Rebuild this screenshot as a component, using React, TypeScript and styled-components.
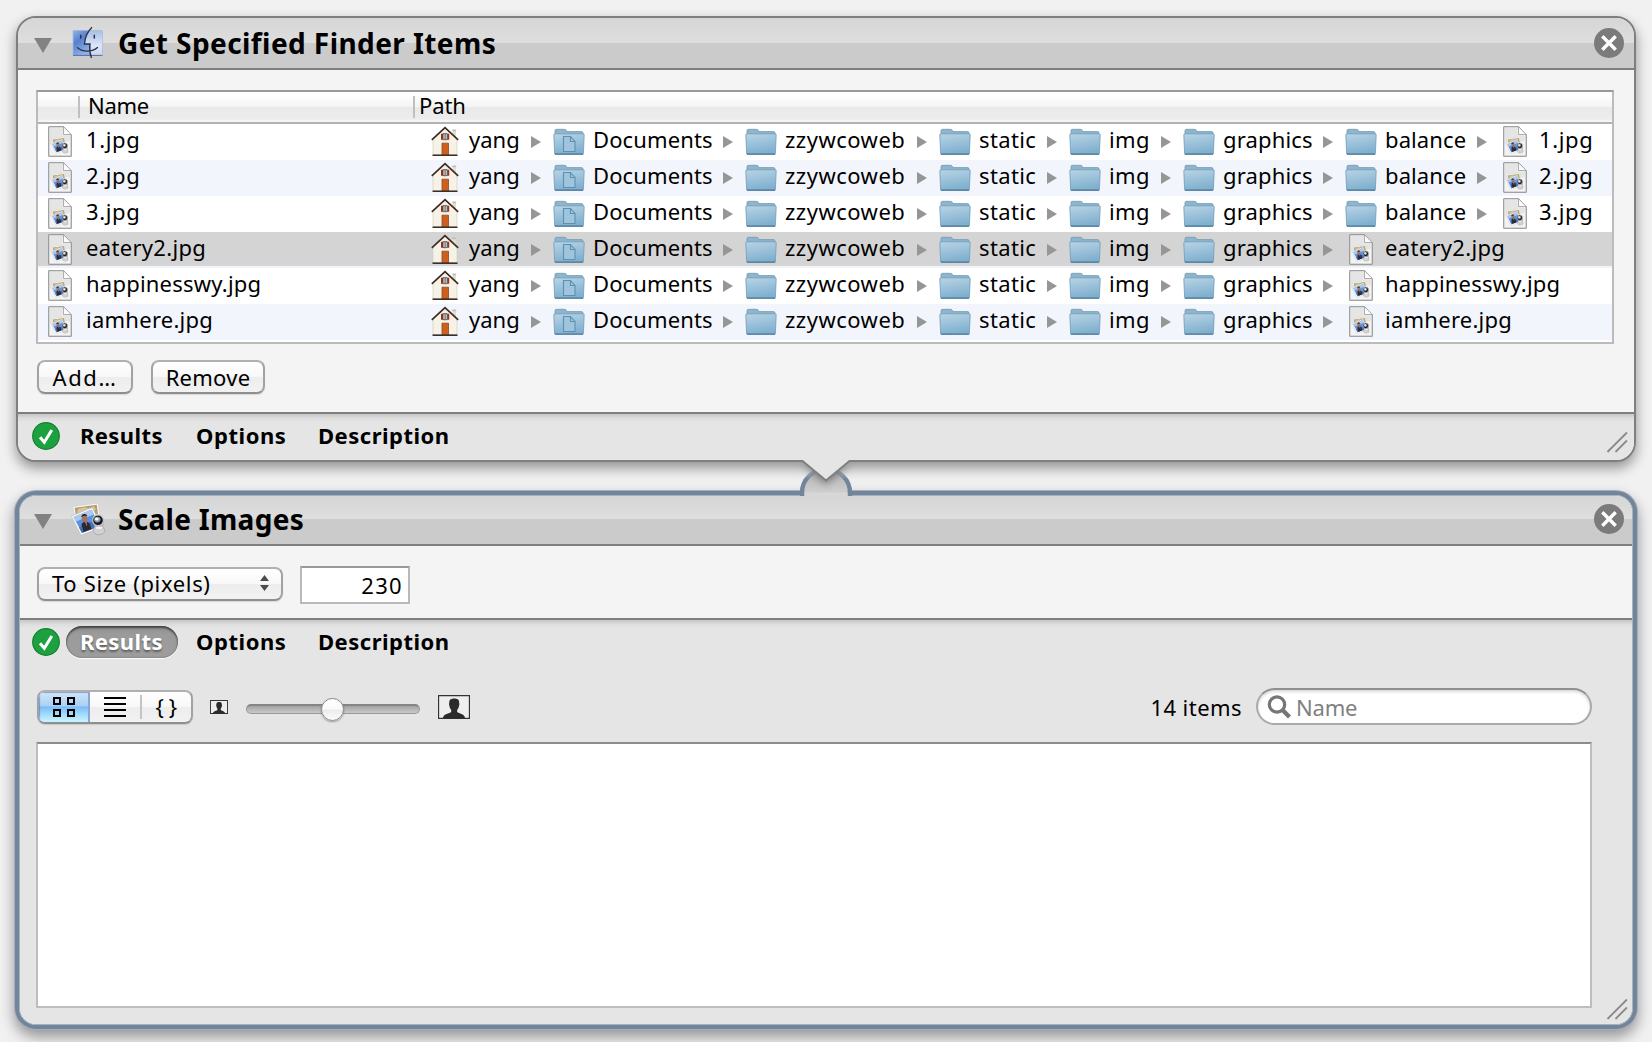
import React from "react";
import styled, { createGlobalStyle, css } from "styled-components";

const GlobalStyle = createGlobalStyle`
  * { box-sizing: border-box; }
  body {
    margin: 0;
    background: #f1f1f1;
    color: #000;
    font: 22px/30px "Noto Sans", "Open Sans", sans-serif;
  }
  svg { display: block; flex: none; }
`;

const Workflow = styled.main`
  position: relative;
  display: flex;
  flex-direction: column;
  height: 1042px;
  padding: 16px 15px 0;
  overflow: hidden;
`;

/* ---------- cards ---------- */

const Card = styled.section`
  display: flex;
  flex-direction: column;
  height: 446px;
  margin: 0 1px;
  border: 2px solid #7f7f7f;
  border-radius: 20px;
  background: #f4f4f4;
  overflow: hidden;
  box-shadow: 0 6px 13px rgba(0, 0, 0, 0.4);
`;

const SelectedCard = styled.section`
  height: 538px;
  margin-top: 29px;
  border: 4px solid #73859b;
  border-radius: 21px;
  background: #a6b1be;
  box-shadow: 0 0 0 1px #a3afbd, 0 7px 14px 1px rgba(0, 0, 0, 0.38);
`;

const SelectedInner = styled.div`
  display: flex;
  flex-direction: column;
  height: 100%;
  border: 1px solid #a6b1be;
  border-radius: 17px;
  background: #f4f4f4;
  overflow: hidden;
`;

const CardHeader = styled.header<{ $compact?: boolean }>`
  display: flex;
  align-items: center;
  flex: none;
  height: ${(p) => (p.$compact ? 50 : 52)}px;
  padding: ${(p) => (p.$compact ? "0 8px 2px 14px" : "0 10px 0 16px")};
  border-bottom: 2px solid #7f7f7f;
  background: ${(p) =>
    p.$compact
      ? "linear-gradient(#d6d6d6, #dedede 23px, #cbcbcb 23px, #cbcbcb)"
      : "linear-gradient(#d6d6d6, #dedede 25px, #cbcbcb 25px, #cbcbcb)"};
`;

const CardTitle = styled.h1<{ $spacing: number }>`
  flex: 1;
  margin: 0;
  font-size: 28px;
  line-height: 40px;
  font-weight: 700;
  letter-spacing: ${(p) => p.$spacing}px;
  white-space: nowrap;
`;

const Disclosure = styled.span`
  width: 0;
  height: 0;
  margin-top: 5px;
  border: 9px solid transparent;
  border-top: 15px solid #828282;
  border-bottom: 0;
`;

const IconSlot = styled.span<{ $left: number; $width: number }>`
  display: flex;
  width: ${(p) => p.$width}px;
  margin-left: ${(p) => p.$left}px;
`;

const CloseButton = styled.button`
  display: flex;
  padding: 0;
  border: 0;
  background: none;
`;

/* ---------- file table ---------- */

const FinderBody = styled.div`
  flex: none;
  height: 342px;
  padding: 20px 20px 0 18px;
`;

const Table = styled.div`
  display: flex;
  flex-direction: column;
  height: 254px;
  border: 2px solid #bbb;
  border-top-color: #999;
  background: #fff;
`;

const TableHead = styled.div`
  display: flex;
  align-items: center;
  flex: none;
  height: 32px;
  border-bottom: 2px solid #b2b2b2;
  background: linear-gradient(#fff, #fdfdfd 5px, #f3f3f3 15px, #e9e9e9 15px, #ececec 27px, #f7f7f7 29px, #f7f7f7);
`;

const HeadCell = styled.span<{ $width?: number; $pad: number; $spacing?: number }>`
  ${(p) => (p.$width ? css`width: ${p.$width}px;` : css`flex: 1;`)}
  height: 22px;
  padding-left: ${(p) => p.$pad}px;
  border-left: 2px solid #c0c0c0;
  line-height: 19px;
  letter-spacing: ${(p) => p.$spacing ?? 0}px;
`;

const HeadSpacer = styled.span`
  width: 40px;
`;

const Row = styled.div<{ $tone: "plain" | "alt" | "selected" }>`
  display: flex;
  flex: none;
  height: 36px;
  background: ${(p) =>
    p.$tone === "selected"
      ? "linear-gradient(#d4d4d4 34px, #f1f5fb 34px)"
      : p.$tone === "alt"
      ? "#f2f5fb"
      : "#fff"};
`;

const Label = styled.span<{ $spacing: number }>`
  height: 31px;
  line-height: 31px;
  letter-spacing: ${(p) => p.$spacing}px;
  white-space: nowrap;
`;

const NameCell = styled.div`
  display: flex;
  width: 391px;
  padding-left: 10px;
  gap: 14px;
`;

const Crumb = styled.div<{ $width: number }>`
  display: flex;
  width: ${(p) => p.$width}px;
  padding-right: 12px;
`;

const CrumbIcon = styled.span`
  display: flex;
  justify-content: center;
  flex: none;
  width: 32px;
  margin-right: 8px;
`;

const CrumbArrow = styled.span`
  width: 0;
  height: 0;
  margin: 12px 0 0 auto;
  border: 6px solid transparent;
  border-left: 10px solid #969696;
  border-right: 0;
`;

/* ---------- buttons and fields ---------- */

const ButtonRow = styled.div`
  display: flex;
  gap: 18px;
  padding: 16px 0 0 1px;
`;

const aquaSurface = css`
  border: 2px solid #a2a2a2;
  border-top-color: #b0b0b0;
  border-bottom-color: #8f8f8f;
  border-radius: 8px;
  background: linear-gradient(#fff, #f8f8f8 48%, #ededed 52%, #f2f2f2);
  box-shadow: 0 1px 1px rgba(0, 0, 0, 0.12);
  color: #000;
  font: inherit;
`;

const PushButton = styled.button<{ $width: number; $spacing: number }>`
  ${aquaSurface}
  width: ${(p) => p.$width}px;
  height: 34px;
  padding: 0;
  line-height: 30px;
  letter-spacing: ${(p) => p.$spacing}px;
`;

const ScaleBody = styled.div`
  display: flex;
  flex: none;
  height: 72px;
  padding: 20px 0 0 17px;
`;

const PopUp = styled.button`
  ${aquaSurface}
  display: flex;
  justify-content: space-between;
  align-items: center;
  width: 246px;
  height: 34px;
  margin-top: 1px;
  padding: 0 12px 2px 13px;
  letter-spacing: 0.65px;
  line-height: 28px;
`;

const NumberField = styled.input`
  width: 110px;
  height: 38px;
  margin-left: 17px;
  padding: 0 5px 0 0;
  border: 2px solid #b9b9b9;
  border-top-color: #989898;
  background: #fff;
  color: #000;
  font: inherit;
  letter-spacing: 1.3px;
  text-align: right;
`;

/* ---------- tabs ---------- */

const Footer = styled.footer`
  display: flex;
  flex-direction: column;
  flex: 1;
  min-height: 0;
  border-top: 2px solid #7f7f7f;
  background: linear-gradient(#c6c6c6, #dcdcdc 4px, #e5e5e5 8px);
`;

const TabBar = styled.nav<{ $left: number }>`
  display: flex;
  align-items: center;
  flex: none;
  height: 44px;
  padding-left: ${(p) => p.$left}px;
`;

const Tab = styled.button<{ $active?: boolean; $width: number; $spacing: number }>`
  width: ${(p) => p.$width}px;
  height: 32px;
  margin-left: 4px;
  padding: 0 0 2px 14px;
  border: 0;
  border-radius: 16px;
  background: none;
  color: #000;
  font: inherit;
  font-weight: 700;
  line-height: 30px;
  letter-spacing: ${(p) => p.$spacing}px;
  text-align: left;
  &:first-of-type { margin-left: 6px; }
  ${(p) =>
    p.$active &&
    css`
      background: linear-gradient(#8d8d8d, #9b9b9b 8px, #9d9d9d);
      color: #fff;
      text-shadow: 0 2px 2px rgba(0, 0, 0, 0.4);
      box-shadow: inset 0 2px 2px rgba(0, 0, 0, 0.5), inset 0 0 2px rgba(0, 0, 0, 0.35),
        0 1px 1px rgba(255, 255, 255, 0.9);
    `}
`;

const GripCorner = styled.span<{ $right: number; $bottom: number }>`
  display: flex;
  align-self: flex-end;
  margin: 0 ${(p) => p.$right}px ${(p) => p.$bottom}px auto;
`;

const FooterRow = styled.div`
  display: flex;
  flex: 1;
`;

/* ---------- results ---------- */

const Toolbar = styled.div`
  display: flex;
  align-items: center;
  flex: none;
  height: 38px;
  margin-top: 24px;
  padding: 0 40px 0 17px;
`;

const Segmented = styled.div`
  ${aquaSurface}
  display: flex;
  width: 156px;
  height: 34px;
  overflow: hidden;
`;

const Segment = styled.button<{ $active?: boolean; $divided?: boolean }>`
  display: flex;
  align-items: center;
  justify-content: center;
  flex: 1;
  position: relative;
  padding: 0;
  border: 0;
  background: ${(p) =>
    p.$active
      ? "linear-gradient(#d3e5f8, #a9d1f6 46%, #7cbcf5 50%, #a3dcfd 75%, #c9f5ff)"
      : "none"};
  ${(p) => p.$active && css`
    padding-right: 2px;
    box-shadow: inset -2px 0 #8aa6d6, inset 1px 1px 1px rgba(70, 100, 170, 0.5);
  `}
  ${(p) =>
    p.$divided &&
    css`
      padding-left: 2px;
      &::before {
        content: "";
        position: absolute;
        left: 0;
        top: 3px;
        bottom: 3px;
        width: 2px;
        background: #c4c4c4;
      }
    `}
`;

const Braces = styled.span`
  font: 22px/26px "Noto Sans", sans-serif;
  letter-spacing: 5px;
  margin: -3px -5px 0 0;
`;

const Slider = styled.div`
  display: flex;
  align-items: center;
  width: 174px;
  height: 10px;
  margin: 0 18px;
  padding-left: 74px;
  border: 1px solid #999;
  border-top: 2px solid #858585;
  border-radius: 5px;
  background: linear-gradient(#a3a3a3, #c9c9c9);
`;

const Knob = styled.span`
  flex: none;
  width: 23px;
  height: 23px;
  margin-top: -1px;
  border: 1.5px solid #8c8c8c;
  border-radius: 50%;
  background: linear-gradient(#fff, #fafafa 45%, #ececec 55%, #fbfbfb);
  box-shadow: 0 1px 2px rgba(0, 0, 0, 0.3);
`;

const SliderWrap = styled.div`
  padding-top: 4px;
`;

const ItemCount = styled.span`
  margin: 0 14px 0 auto;
  letter-spacing: 0.45px;
`;

const SearchField = styled.label`
  display: flex;
  align-items: center;
  gap: 4px;
  width: 336px;
  height: 37px;
  margin-top: -1px;
  padding-left: 9px;
  border: 2px solid #aaa;
  border-top-color: #8f8f8f;
  border-radius: 19px;
  background: #fff;
  box-shadow: inset 0 2px 3px rgba(0, 0, 0, 0.15);
`;

const SearchInput = styled.input`
  width: 280px;
  padding: 0 0 0 1px;
  border: 0;
  outline: 0;
  background: none;
  font: inherit;
  letter-spacing: -0.2px;
  &::placeholder { color: #808080; opacity: 1; }
`;

const ResultsArea = styled.div`
  display: flex;
  flex: 1;
  padding-left: 16px;
  margin-top: 16px;
`;

const ResultsPane = styled.div`
  width: 1556px;
  height: 266px;
  border: 2px solid #bdbdbd;
  border-top-color: #8c8c8c;
  background: #fff;
`;

/* The arrow lies over the gap between the two cards. */
const Connector = styled.svg`
  position: absolute;
  left: 786px;
  top: 454px;
`;

/* ---------- drawings ---------- */

const FinderIcon = () => (
  <svg width="32" height="34" viewBox="0 0 32 34">
    <defs>
      <linearGradient id="fl" x1="0" y1="0" x2=".5" y2="1">
        <stop offset="0" stopColor="#8fafe6" />
        <stop offset=".45" stopColor="#5680cd" />
        <stop offset="1" stopColor="#8fb2ea" />
      </linearGradient>
      <linearGradient id="fr" x1="0" y1="0" x2="0" y2="1">
        <stop offset="0" stopColor="#a9bde6" />
        <stop offset=".6" stopColor="#dce6f7" />
        <stop offset="1" stopColor="#c7d7f3" />
      </linearGradient>
    </defs>
    <rect x="1" y="4.500" width="29.500" height="25" rx="1" fill="url(#fr)" stroke="#a3b4d6" strokeWidth=".6" />
    <path d="M1.300 4.800H17C14 9 12.500 14 12.500 18H18C17.500 22 17.500 25 18.300 29.300H1.300Z" fill="url(#fl)" />
    <path d="M1 29.400H30.500" stroke="#5c6f99" strokeWidth="1" />
    <path d="M20 1.200C15.500 5.500 13 12 12.400 18H18C17.200 23 17.800 27.500 19.500 32" fill="none" stroke="#2a3140" strokeWidth="1.300" />
    <path d="M8.700 9.200V12M22.300 9.200V12" stroke="#2a3140" strokeWidth="1.500" strokeLinecap="round" />
    <path d="M5.500 21.700C11 26.300 20 26.300 25.500 21.500" fill="none" stroke="#2a3140" strokeWidth="1.300" strokeLinecap="round" />
  </svg>
);

const PreviewShapes = () => (
  <g>
    <path d="M1.800 4.500L27.300 1L30 24L6 27Z" fill="#fbfbfb" stroke="#c9c9c9" strokeWidth=".6" />
    <path d="M3.600 5.800L25.800 2.800L27 12L5 14Z" fill="#b59d70" />
    <path d="M7 7L13 5.300L19 6.500L23 4L25 8L6 11Z" fill="#d6c59c" />
    <path d="M.4 14.200L21.200 5.400L31 25L10 33.200Z" fill="#fff" stroke="#bdbdbd" strokeWidth=".7" />
    <path d="M2.500 15L20.500 7.500L28.600 24.200L10.900 31Z" fill="#5d93dc" />
    <path d="M2.500 15L20.500 7.500L23 12.500L5 19.500Z" fill="#a9c9f0" />
    <path d="M8 25.500L15 20.500L26.500 19.500L28.600 24.200L10.900 31Z" fill="#3f73bc" />
    <ellipse cx="13.500" cy="16" rx="2.800" ry="3.600" fill="#a5745c" />
    <path d="M10.300 15C10.500 11.500 15 10.800 16.500 14C14.500 13.400 12.500 13.400 10.300 15Z" fill="#2a1d18" />
    <path d="M10.500 22.500C11 19.500 16 18.500 18.500 21.500L20.500 27L12.500 30Z" fill="#2e2832" />
    <path d="M13.500 19.700L15.700 19.300L16.200 24.500Z" fill="#c96a5a" />
    <ellipse cx="28" cy="28.500" rx="5.800" ry="4.200" fill="#d2d2d2" stroke="#999" strokeWidth=".6" />
    <path d="M23.500 21V26.500C25 29 31.500 29 33 26V20Z" fill="#bcbcbc" />
    <ellipse cx="28" cy="26" rx="3.500" ry="1.500" fill="#f1f1f1" />
    <circle cx="27" cy="18.300" r="5.400" fill="#17191d" stroke="#c4c4c4" strokeWidth="1.200" />
    <ellipse cx="26.300" cy="17.600" rx="3.200" ry="2.800" fill="#8f9bb0" />
    <ellipse cx="25.800" cy="17" rx="1.900" ry="1.600" fill="#f2f5fa" />
  </g>
);

const PreviewIcon = () => (
  <svg width="36" height="34" viewBox="0 0 36 34">
    <PreviewShapes />
  </svg>
);

const JpegIcon = () => (
  <svg width="24" height="33" viewBox="0 0 24 33">
    <path d="M.7 2.700H15.500L23.300 11V32.300H.7Z" fill="#e9e9e9" stroke="#8e8e8e" strokeWidth="1" />
    <path d="M2 4H14.500V12H22V31H2Z" fill="#f3f3f3" />
    <path d="M2 4H14.500V12H22V17L2 20Z" fill="#dedede" opacity=".7" />
    <g transform="translate(3 12.500) scale(.51)">
      <PreviewShapes />
    </g>
    <path d="M15.500 2.700V10.500H23.300Z" fill="#fdfdfd" stroke="#9b9b9b" strokeWidth=".8" />
  </svg>
);

const HomeIcon = () => (
  <svg width="28" height="33" viewBox="0 0 28 33">
    <path d="M21.500 6.500H25V14H21.500Z" fill="#e6dfd1" />
    <path d="M21.300 5.500H25.200V7.300H21.300Z" fill="#c9bfa9" />
    <path d="M2 15L14 4.500L26 15V30.500H2Z" fill="#f6f2e6" stroke="#d6cfbd" strokeWidth=".7" />
    <path d="M.8 15.800L14 3.600L27.200 15.800" fill="none" stroke="#3b2d27" strokeWidth="1.700" />
    <path d="M10 9.700H12V15.700H10ZM16.200 9.700H18.200V15.700H16.200Z" fill="#a32c1d" />
    <path d="M12 9.700H16.200V15.700H12Z" fill="#dfe4e2" stroke="#4a4540" strokeWidth=".8" />
    <path d="M14.100 9.700V15.700" stroke="#4a4540" strokeWidth=".9" />
    <path d="M11 19.200H17.500V31H11Z" fill="#cf5f1f" stroke="#8a4a24" strokeWidth=".8" />
    <path d="M1.500 31.200H26.500" stroke="#3a2f2a" strokeWidth="1.600" />
  </svg>
);

const FolderIcon = ({ documents }: { documents?: boolean }) => (
  <svg width="32" height="33" viewBox="0 0 32 33">
    <defs>
      <linearGradient id="fold" x1="0" y1="0" x2=".25" y2="1">
        <stop offset="0" stopColor="#b9d4e5" />
        <stop offset="1" stopColor="#80b0cf" />
      </linearGradient>
    </defs>
    <path d="M2 13V6.500Q2 5.300 3.500 5.300H11.500Q13 5.300 13.500 6.600L14 7.600H28.500Q30 7.600 30 9V13Z" fill="#8fb5cc" stroke="#7099b3" strokeWidth=".8" />
    <path d="M.8 10.800Q.8 9.800 2 9.800H30Q31.300 9.800 31.200 10.800L30.400 29.300Q30.300 30.300 29.300 30.300H2.700Q1.700 30.300 1.600 29.300Z" fill="url(#fold)" stroke="#6d9cbb" strokeWidth=".8" />
    <path d="M1.800 30.100H30.200" stroke="#4a7898" strokeWidth="1.200" />
    {documents && (
      <path d="M10.500 12.500H17.500L22 17.500V27.500H10.500ZM17.500 12.500V17.500H22" fill="#9fc4dc" stroke="#5b90b5" strokeWidth="1.100" />
    )}
  </svg>
);

const CheckIcon = () => (
  <svg width="28" height="28" viewBox="0 0 28 28">
    <circle cx="14" cy="14" r="13.300" fill="#1da140" stroke="#128030" strokeWidth="1.200" />
    <path d="M8 15.200L12.300 20.200L19.800 8" fill="none" stroke="#fff" strokeWidth="3" />
  </svg>
);

const CloseIcon = () => (
  <svg width="30" height="30" viewBox="0 0 30 30">
    <circle cx="15" cy="15" r="15" fill="#7b7b7b" />
    <path d="M8.300 8.300L21.700 21.700M21.700 8.300L8.300 21.700" stroke="#fff" strokeWidth="3.400" />
  </svg>
);

const GripIcon = () => (
  <svg width="21" height="21" viewBox="0 0 21 21">
    <path d="M0 19.500L19.500 0M8 19.500L19.500 8" transform="translate(1 1.300)" stroke="#fff" strokeWidth="1" />
    <path d="M.5 20L20 .5M8.500 20L20 8.500" stroke="#8a8a8a" strokeWidth="2" />
  </svg>
);

const UpDownIcon = () => (
  <svg width="9" height="16" viewBox="0 0 9 16">
    <path d="M0 6L4.500 0L9 6ZM0 10L4.500 16L9 10Z" fill="#4b4b4b" />
  </svg>
);

const GridIcon = () => (
  <svg width="22" height="20" viewBox="0 0 22 20">
    <path d="M1 1H7V7H1ZM15 1H21V7H15ZM1 13H7V19H1ZM15 13H21V19H15Z" fill="none" stroke="#000" strokeWidth="2" />
  </svg>
);

const ListIcon = () => (
  <svg width="22" height="20" viewBox="0 0 22 20">
    <path d="M0 1H22M0 7H22M0 13H22M0 19H22" stroke="#000" strokeWidth="2" />
  </svg>
);

const PortraitIcon = ({ width, height }: { width: number; height: number }) => (
  <svg width={width} height={height} viewBox="0 0 32 24" preserveAspectRatio="none">
    <rect
      x=".5"
      y=".5"
      width="31"
      height="23"
      fill="#eee"
      stroke="#333"
      strokeWidth="1.300"
      vectorEffect="non-scaling-stroke"
    />
    <path
      d="M5 23.500C5 20 8 19.300 12 17.800C13.500 17.200 13.600 16 13 14.500C11.500 13 11.700 11.500 11.200 10C10.700 8.800 11.200 8.500 11.300 7.500C11.200 4.500 13.500 3.600 16.200 3.600C19 3.600 21.200 4.500 21.100 7.500C21.200 8.500 21.700 8.800 21.200 10C20.700 11.500 20.900 13 19.400 14.500C18.800 16 18.900 17.200 20.400 17.800C24 19.300 27 20 27 23.500Z"
      fill="#2b2b2b"
    />
  </svg>
);

const SearchIcon = () => (
  <svg width="24" height="24" viewBox="0 0 24 24">
    <circle cx="10" cy="9.500" r="7.700" fill="none" stroke="#767676" strokeWidth="3.200" />
    <path d="M15 14.500L22.500 22" stroke="#767676" strokeWidth="4.200" />
  </svg>
);

const ConnectorArrow = () => (
  <Connector width="80" height="46" viewBox="0 0 80 46">
    <defs>
      <linearGradient id="bump" x1="0" y1="0" x2="0" y2="1">
        <stop offset="0" stopColor="#b4b4b4" />
        <stop offset="1" stopColor="#cfcfcf" />
      </linearGradient>
      <linearGradient id="rim" gradientUnits="userSpaceOnUse" x1="0" y1="15" x2="0" y2="25">
        <stop offset="0" stopColor="#73859b" stopOpacity=".3" />
        <stop offset="1" stopColor="#73859b" />
      </linearGradient>
      <filter id="drop" x="-30%" y="-30%" width="160%" height="200%">
        <feDropShadow dx="0" dy="4" stdDeviation="3.500" floodOpacity=".3" />
      </filter>
      <clipPath id="below">
        <rect x="0" y="8" width="80" height="40" />
      </clipPath>
    </defs>
    <path d="M18 39A22 22 0 0 1 62 39Z" fill="url(#bump)" />
    <path d="M18 38.500H62V42H18Z" fill="#d7d7d7" />
    <path d="M16 42V39A24 24 0 0 1 64 39V42" fill="none" stroke="url(#rim)" strokeWidth="4.500" />
    <g clipPath="url(#below)">
      <path d="M16 7L40 27L64 7Z" fill="#e5e5e5" filter="url(#drop)" />
    </g>
    <path d="M15.500 5.500H64.500L40 26Z" fill="#e5e5e5" />
    <path d="M14 7H16.500L40 26.500L63.500 7H66" fill="none" stroke="#7f7f7f" strokeWidth="2" />
  </Connector>
);

/* ---------- data ---------- */

type CrumbData = { label: string; kind: "home" | "documents" | "folder"; width: number; spacing: number };

const HOME_PATH: CrumbData[] = [
  { label: "yang", kind: "home", width: 124, spacing: 0 },
  { label: "Documents", kind: "documents", width: 192, spacing: 0.12 },
  { label: "zzywcoweb", kind: "folder", width: 194, spacing: 0.5 },
  { label: "static", kind: "folder", width: 130, spacing: 0.38 },
  { label: "img", kind: "folder", width: 114, spacing: 0.4 },
  { label: "graphics", kind: "folder", width: 162, spacing: 0.15 },
];
const BALANCE: CrumbData = { label: "balance", kind: "folder", width: 154, spacing: 0.1 };

const FILES = [
  { name: "1.jpg", spacing: 0.65, nested: true },
  { name: "2.jpg", spacing: 0.65, nested: true },
  { name: "3.jpg", spacing: 0.65, nested: true },
  { name: "eatery2.jpg", spacing: 0.32, selected: true },
  { name: "happinesswy.jpg", spacing: 0.22 },
  { name: "iamhere.jpg", spacing: 0.26 },
];

const CrumbItem = ({ label, kind, width, spacing }: CrumbData) => (
  <Crumb $width={width}>
    <CrumbIcon>{kind === "home" ? <HomeIcon /> : <FolderIcon documents={kind === "documents"} />}</CrumbIcon>
    <Label $spacing={spacing}>{label}</Label>
    <CrumbArrow />
  </Crumb>
);

const Tabs = ({ left, active }: { left: number; active?: boolean }) => (
  <TabBar $left={left}>
    <CheckIcon />
    <Tab $width={112} $spacing={0.4} $active={active}>Results</Tab>
    <Tab $width={118} $spacing={0.55}>Options</Tab>
    <Tab $width={158} $spacing={0.5}>Description</Tab>
  </TabBar>
);

export default function App() {
  return (
    <>
      <GlobalStyle />
      <Workflow>
        <Card>
          <CardHeader>
            <Disclosure />
            <IconSlot $left={20} $width={46}>
              <FinderIcon />
            </IconSlot>
            <CardTitle $spacing={0.42}>Get Specified Finder Items</CardTitle>
            <CloseButton aria-label="Remove action">
              <CloseIcon />
            </CloseButton>
          </CardHeader>
          <FinderBody>
            <Table>
              <TableHead>
                <HeadSpacer />
                <HeadCell $width={335} $pad={8} $spacing={-0.3}>Name</HeadCell>
                <HeadCell $pad={4} $spacing={-0.1}>Path</HeadCell>
              </TableHead>
              {FILES.map((file, i) => (
                <Row key={file.name} $tone={file.selected ? "selected" : i % 2 ? "alt" : "plain"}>
                  <NameCell>
                    <JpegIcon />
                    <Label $spacing={file.spacing}>{file.name}</Label>
                  </NameCell>
                  {HOME_PATH.map((crumb) => (
                    <CrumbItem key={crumb.label} {...crumb} />
                  ))}
                  {file.nested && <CrumbItem {...BALANCE} />}
                  <CrumbIcon>
                    <JpegIcon />
                  </CrumbIcon>
                  <Label $spacing={file.spacing}>{file.name}</Label>
                </Row>
              ))}
            </Table>
            <ButtonRow>
              <PushButton $width={96} $spacing={1.6}>Add…</PushButton>
              <PushButton $width={114} $spacing={0.25}>Remove</PushButton>
            </ButtonRow>
          </FinderBody>
          <Footer>
            <FooterRow>
              <Tabs left={14} />
              <GripCorner $right={6} $bottom={7}>
                <GripIcon />
              </GripCorner>
            </FooterRow>
          </Footer>
        </Card>

        <SelectedCard>
          <SelectedInner>
            <CardHeader $compact>
              <Disclosure />
              <IconSlot $left={19} $width={47}>
                <PreviewIcon />
              </IconSlot>
              <CardTitle $spacing={0.3}>Scale Images</CardTitle>
              <CloseButton aria-label="Remove action">
                <CloseIcon />
              </CloseButton>
            </CardHeader>
            <ScaleBody>
              <PopUp>
                To Size (pixels)
                <UpDownIcon />
              </PopUp>
              <NumberField defaultValue="230" />
            </ScaleBody>
            <Footer>
              <Tabs left={12} active />
              <Toolbar>
                <Segmented>
                  <Segment $active>
                    <GridIcon />
                  </Segment>
                  <Segment>
                    <ListIcon />
                  </Segment>
                  <Segment $divided>
                    <Braces>{"{}"}</Braces>
                  </Segment>
                </Segmented>
                <IconSlot $left={17} $width={18}>
                  <PortraitIcon width={18} height={14} />
                </IconSlot>
                <SliderWrap>
                  <Slider>
                    <Knob />
                  </Slider>
                </SliderWrap>
                <PortraitIcon width={32} height={24} />
                <ItemCount>14 items</ItemCount>
                <SearchField>
                  <SearchIcon />
                  <SearchInput placeholder="Name" />
                </SearchField>
              </Toolbar>
              <ResultsArea>
                <ResultsPane />
                <GripCorner $right={4} $bottom={4}>
                  <GripIcon />
                </GripCorner>
              </ResultsArea>
            </Footer>
          </SelectedInner>
        </SelectedCard>
        <ConnectorArrow />
      </Workflow>
    </>
  );
}
